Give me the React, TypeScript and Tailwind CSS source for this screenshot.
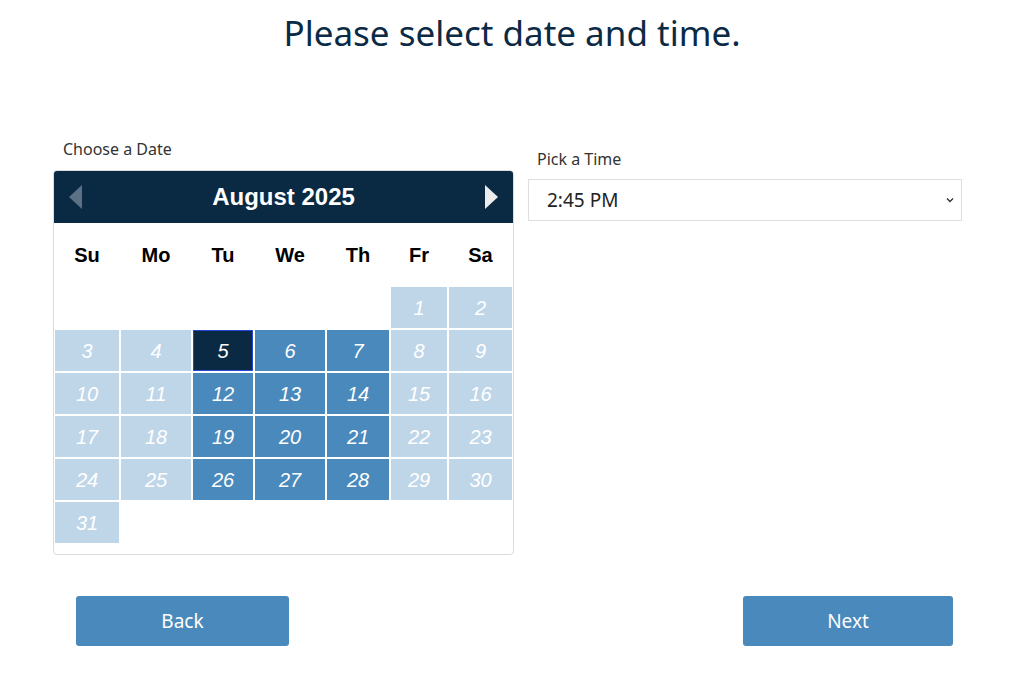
import React from "react";

const COLS = "grid-cols-[64px_70px_60px_70px_62px_56px_63px]";

type Day = { n: number; kind: "off" | "open" | "sel" };

function buildDays(): (Day | null)[] {
  const cells: (Day | null)[] = [null, null, null, null, null];
  for (let n = 1; n <= 31; n++) {
    const dow = (n + 4) % 7; // Aug 1 2025 = Friday
    let kind: Day["kind"] = "off";
    if (n === 5) kind = "sel";
    else if (n > 5 && dow >= 2 && dow <= 4) kind = "open";
    cells.push({ n, kind });
  }
  return cells;
}

function Calendar() {
  const days = buildDays();
  return (
    <div className="rounded-[4px] border border-[#dcdcdc] bg-white pb-[11px] font-['Liberation_Sans',Arial,sans-serif]">
      {/* header */}
      <div className="flex h-[52px] items-center justify-between rounded-t-[3px] bg-[#0a2942] px-[15px]">
        <svg width="13" height="24" viewBox="0 0 13 24">
          <polygon points="13,0 13,24 0,12" fill="#5b7186" />
        </svg>
        <span className="text-[24px] font-bold text-white">August 2025</span>
        <svg width="13" height="24" viewBox="0 0 13 24">
          <polygon points="0,0 0,24 13,12" fill="#ececec" />
        </svg>
      </div>

      <div className={`grid ${COLS} gap-x-[2px] px-[1px]`}>
        {["Su", "Mo", "Tu", "We", "Th", "Fr", "Sa"].map((d) => (
          <div key={d} className="flex h-[64px] items-center justify-center text-[20px] font-bold text-black">
            {d}
          </div>
        ))}
      </div>

      <div className={`grid ${COLS} gap-x-[2px] gap-y-[2px] px-[1px]`}>
        {days.map((d, i) =>
          d === null ? (
            <div key={`e${i}`} className="h-[41px]" />
          ) : (
            <div
              key={d.n}
              className={
                "flex h-[41px] items-center justify-center text-[20px] italic text-white " +
                (d.kind === "sel"
                  ? "border border-[#2448d8] bg-[#0a2942]"
                  : d.kind === "open"
                  ? "bg-[#4a89bc]"
                  : "bg-[#bfd6e9]")
              }
            >
              {d.n}
            </div>
          )
        )}
      </div>
    </div>
  );
}

export default function App() {
  return (
    <div className="min-h-[687px] bg-white font-['Noto_Sans',sans-serif] text-[#222]">
      <h1 className="pt-[10px] text-center text-[35px] leading-[46px] text-[#0b2a45]">
        Please select date and time.
      </h1>

      <div className="mt-[82px] flex gap-[14px] pl-[53px]">
        <div className="w-[461px]">
          <p className="mb-[10px] pl-[10px] text-[16px] leading-[22px] text-[#333]">Choose a Date</p>
          <Calendar />
        </div>

        <div className="w-[434px] pt-[10px]">
          <p className="mb-[9px] pl-[9px] text-[16px] leading-[22px] text-[#333]">Pick a Time</p>
          <div className="flex h-[42px] items-center justify-between border border-[#dedede] pl-[18px] pr-[6px]">
            <span className="text-[19px] text-[#222]">2:45 PM</span>
            <svg width="10" height="10" viewBox="0 0 10 10">
              <path d="M2 3.5 L5 6.5 L8 3.5" fill="none" stroke="#333" strokeWidth="1.4" />
            </svg>
          </div>
        </div>
      </div>

      <div className="mt-[41px] flex justify-between pl-[76px] pr-[71px]">
        <button className="h-[50px] w-[213px] rounded-[3px] bg-[#4a89bc] text-[19px] text-white">Back</button>
        <button className="h-[50px] w-[210px] rounded-[3px] bg-[#4a89bc] text-[19px] text-white">Next</button>
      </div>
    </div>
  );
}
